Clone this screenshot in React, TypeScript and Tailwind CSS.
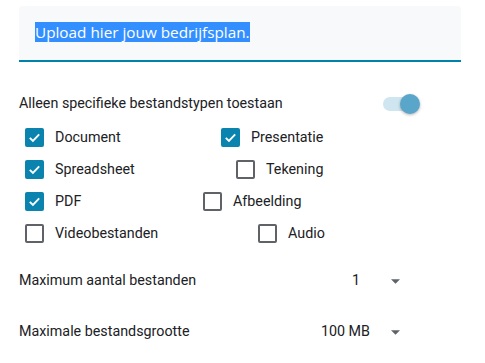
import React from "react";

const Check = ({ checked }: { checked: boolean }) =>
  checked ? (
    <div className="w-[19px] h-[19px] rounded-[2px] bg-[#0a84ae] flex items-center justify-center shrink-0">
      <svg width="15" height="15" viewBox="0 0 24 24">
        <path d="M4.5 12.5l5 5 10-10.5" fill="none" stroke="white" strokeWidth="3" />
      </svg>
    </div>
  ) : (
    <div className="w-[19px] h-[19px] rounded-[2px] border-2 border-[#5f6368] shrink-0" />
  );

const Item = ({ checked, label, className = "" }: { checked: boolean; label: string; className?: string }) => (
  <div className={`flex items-center ${className}`}>
    <Check checked={checked} />
    <span className="ml-[11px] text-[14.3px] text-[#202124]">{label}</span>
  </div>
);

const Arrow = () => (
  <svg width="9" height="5" viewBox="0 0 10 5" className="shrink-0">
    <path d="M0 0h10L5 5z" fill="#5f6368" />
  </svg>
);

export default function App() {
  return (
    <div className="w-[485px] h-[363px] bg-white" style={{ fontFamily: "Roboto, sans-serif" }}>
      <div className="pt-[6px] pl-[19px]">
        <div className="w-[442px] h-[56px] bg-[#f8f9fa] rounded-t-[4px] border-b-2 border-[#0083a9] flex items-center pl-[16px] pb-[2px]">
          <span
            className="bg-[#338fff] text-white text-[15.3px] leading-[20px]"
            style={{ fontFamily: "'Open Sans', sans-serif" }}
          >
            Upload hier jouw bedrijfsplan.
          </span>
        </div>
      </div>
      <div className="pl-[19px] mt-[32px] flex items-center w-[420px] h-[20px]">
        <span className="text-[14.3px] text-[#202124]">Alleen specifieke bestandstypen toestaan</span>
        <div className="ml-auto relative w-[38px] h-[20px] flex items-center">
          <div className="ml-[1px] w-[30px] h-[14px] rounded-full bg-[#cfe5ef]" />
          <div className="absolute right-0 top-0 w-[20px] h-[20px] rounded-full bg-[#5aa6ca] shadow-[0_1px_3px_rgba(0,0,0,0.3)]" />
        </div>
      </div>
      <div className="pl-[25px] mt-[14px] flex flex-col gap-[13px]">
        <div className="flex items-center h-[19px]">
          <Item checked label="Document" className="w-[196px]" />
          <Item checked label="Presentatie" />
        </div>
        <div className="flex items-center h-[19px]">
          <Item checked label="Spreadsheet" className="w-[211px]" />
          <Item checked={false} label="Tekening" />
        </div>
        <div className="flex items-center h-[19px]">
          <Item checked label="PDF" className="w-[178px]" />
          <Item checked={false} label="Afbeelding" />
        </div>
        <div className="flex items-center h-[19px]">
          <Item checked={false} label="Videobestanden" className="w-[233px]" />
          <Item checked={false} label="Audio" />
        </div>
      </div>
      <div className="pl-[19px] mt-[28px] flex items-center w-[400px] h-[20px]">
        <span className="text-[14.3px] text-[#202124]">Maximum aantal bestanden</span>
        <span className="ml-auto text-[14.3px] text-[#202124] mr-[31px]">1</span>
        <Arrow />
      </div>
      <div className="pl-[19px] mt-[31px] flex items-center w-[400px] h-[20px]">
        <span className="text-[14.3px] text-[#202124]">Maximale bestandsgrootte</span>
        <span className="ml-auto text-[14.3px] text-[#202124] mr-[21px]">100 MB</span>
        <Arrow />
      </div>
    </div>
  );
}
